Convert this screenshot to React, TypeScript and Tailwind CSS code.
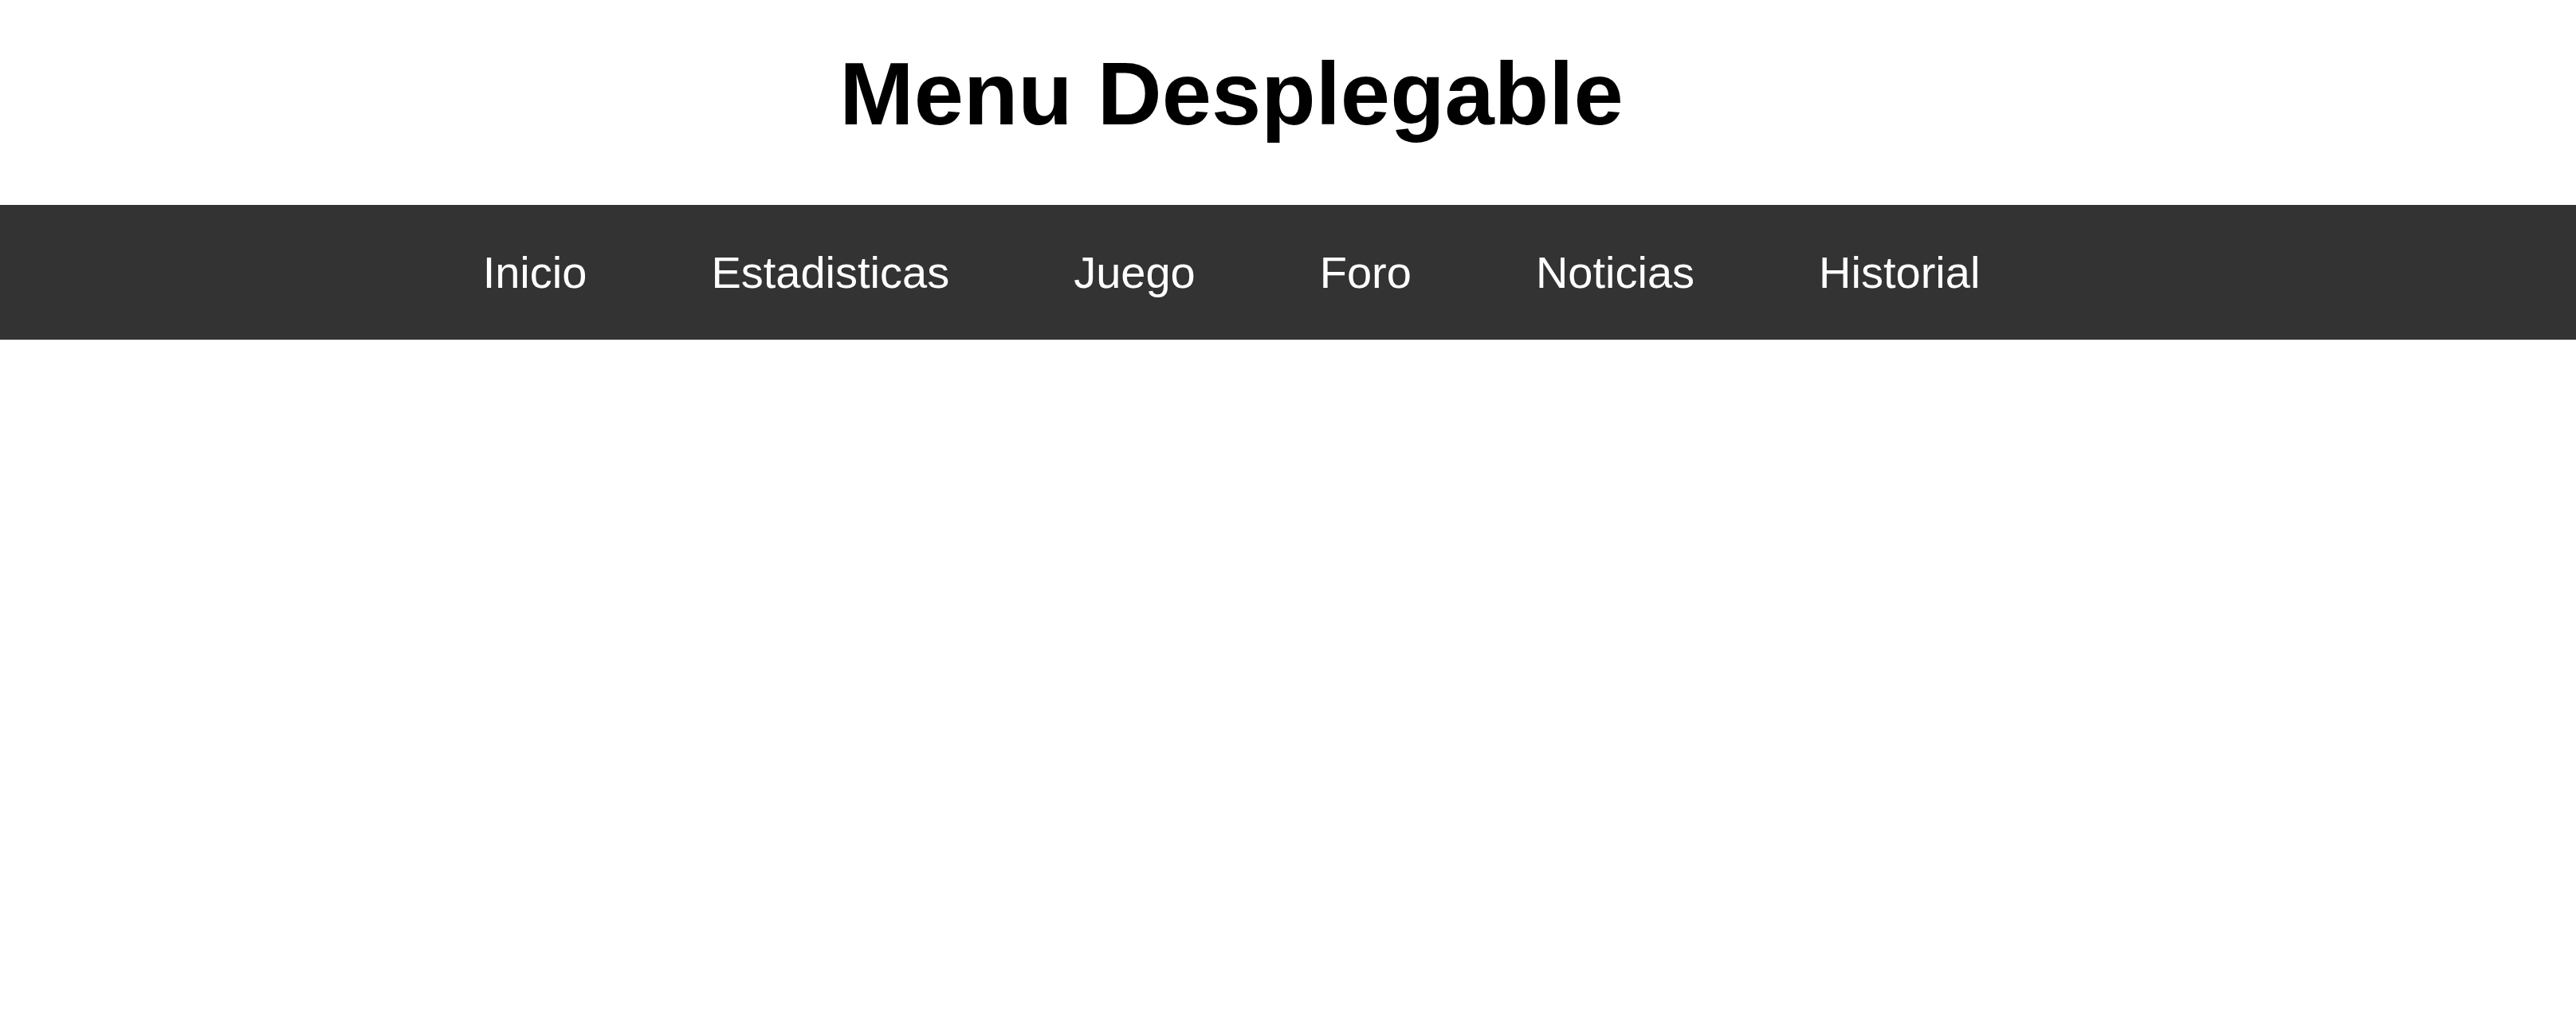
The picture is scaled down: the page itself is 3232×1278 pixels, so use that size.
import React from "react";

const items = ["Inicio", "Estadisticas", "Juego", "Foro", "Noticias", "Historial"];

export default function App() {
  return (
    <div className="min-h-[1278px] bg-white" style={{ fontFamily: '"Liberation Sans", Arial, sans-serif' }}>
      <h1 className="flex justify-center pr-[142px] pt-[55px] pb-[77px] text-[112px] font-bold leading-[125px] text-black">
        Menu Desplegable
      </h1>
      <nav className="bg-[#333333]">
        <ul className="flex justify-center pr-[142px]">
          {items.map((it) => (
            <li key={it} className="px-[78px] py-[53px] text-[56px] leading-[63px] text-white">
              <a href="#">{it}</a>
            </li>
          ))}
        </ul>
      </nav>
    </div>
  );
}
